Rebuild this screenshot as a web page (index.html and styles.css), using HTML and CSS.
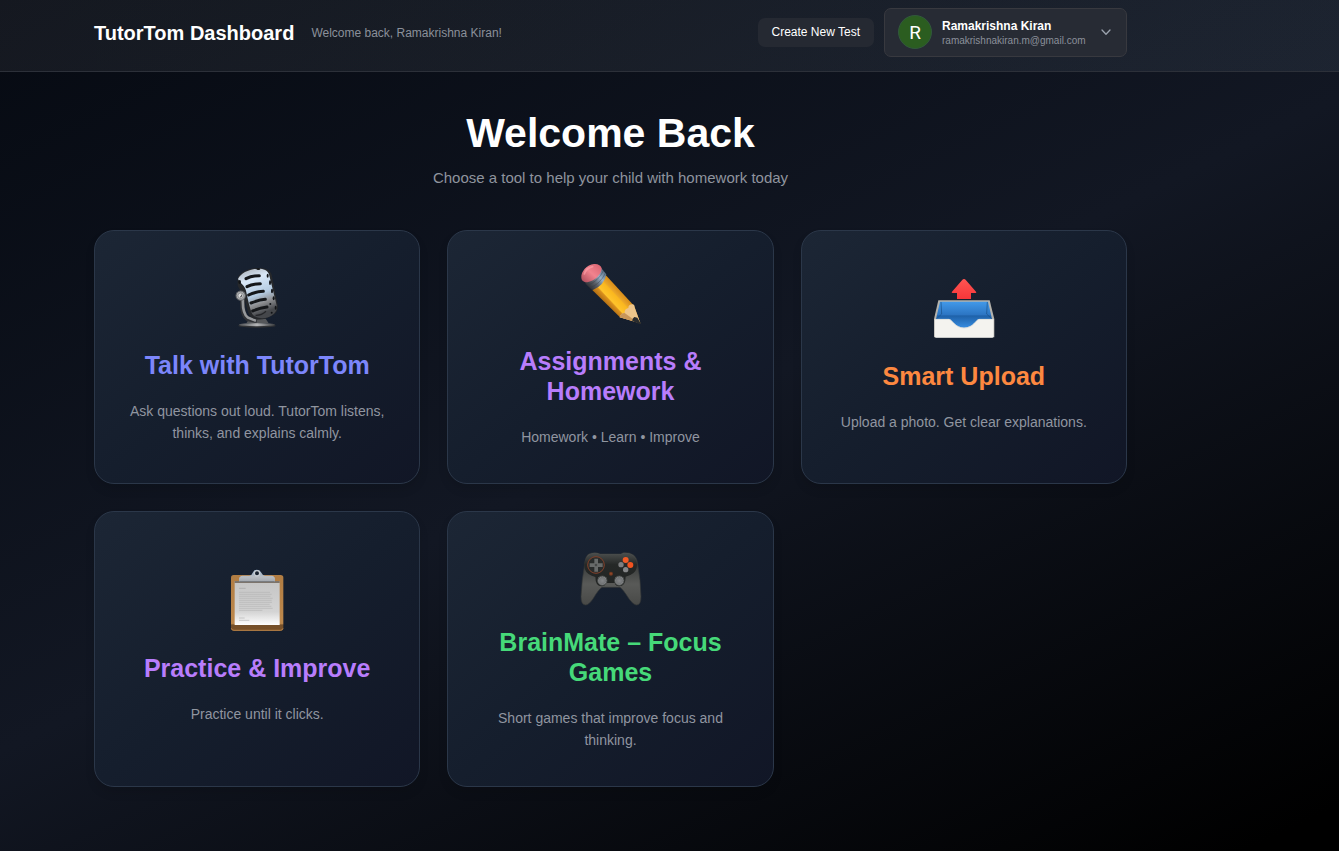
FILE: index.html
```html
<!DOCTYPE html>
<html lang="en">
<head>
<meta charset="utf-8">
<meta name="viewport" content="width=device-width, initial-scale=1">
<title>TutorTom Dashboard</title>
<link rel="stylesheet" href="styles.css">
</head>
<body>
<header class="topbar">
  <div class="brand">
    <h1 class="brand-name">TutorTom Dashboard</h1>
    <p class="brand-note">Welcome back, Ramakrishna Kiran!</p>
  </div>
  <div class="actions">
    <button class="new-test" type="button">Create New Test</button>
    <button class="profile" type="button" aria-haspopup="menu">
      <span class="avatar">R</span>
      <span class="identity">
        <span class="identity-name">Ramakrishna Kiran</span>
        <span class="identity-mail">ramakrishnakiran.m@gmail.com</span>
      </span>
      <svg class="chevron" viewBox="0 0 14 14" aria-hidden="true"><path d="M3 5l4 4.200 4-4.200" fill="none" stroke="currentColor" stroke-width="1.300" stroke-linecap="round" stroke-linejoin="round"/></svg>
    </button>
  </div>
</header>
<main class="content">
  <section class="hero">
    <h2 class="hero-title">Welcome Back</h2>
    <p class="hero-text">Choose a tool to help your child with homework today</p>
  </section>
  <section class="tools">
    <a class="card" href="#talk">
      <svg class="card-icon" viewBox="30 45 180 180" aria-hidden="true">
        <defs>
          <linearGradient id="mic" x1="0" y1="0" x2="0.300" y2="1"><stop offset="0" stop-color="#a4a8ad"/><stop offset=".3" stop-color="#d9e8f8"/><stop offset=".62" stop-color="#b4cbe2"/><stop offset=".8" stop-color="#8e8f92"/><stop offset="1" stop-color="#45474b"/></linearGradient>
          <linearGradient id="stand" x1="0" y1="0" x2="1" y2="0"><stop offset="0" stop-color="#4e5053"/><stop offset=".5" stop-color="#b5b6b8"/><stop offset="1" stop-color="#3c3e41"/></linearGradient>
        </defs>
        <ellipse cx="120" cy="212" rx="56" ry="6" fill="#303235"/>
        <ellipse cx="120" cy="209" rx="54" ry="5" fill="url(#stand)"/>
        <path d="M96 193l50-2 9 14H88z" fill="#55575a"/>
        <path d="M77 125c-2 30 2 58 15 66l28 6" fill="none" stroke="#303236" stroke-width="15"/>
        <path d="M78 125c-2 30 2 54 15 63l24 9" fill="none" stroke="#96989b" stroke-width="8"/>
        <path d="M62 71c3-17 30-32 62-32 24 0 36 8 40 20l18 91c2 18-7 30-22 34-12 11-47 15-60 0-8-10-12-31-17-53L62 92z" fill="#26282b"/>
        <path d="M63 72c8-18 36-30 61-31 16 0 28 5 32 17l24 97c1 12-10 25-27 32-18 6-40 2-47-10-8-17-14-47-19-70-4-16-19-24-24-35z" fill="url(#mic)"/>
        <g fill="none" stroke="#15171a" stroke-width="9" stroke-linecap="round"><path d="M87 71c14-8 27-9 40-9M90 95c14-8 27-9 40-9M95 120c13-7 28-10 44-11M102 144c13-5 28-10 43-11M107 168c12-5 29-10 43-12"/></g>
        <path d="M116 181q17 1 31-12" fill="none" stroke="#252629" stroke-width="4"/>
        <g fill="#111316"><ellipse cx="68" cy="81" rx="4" ry="6"/><ellipse cx="124" cy="42" rx="6" ry="3"/><ellipse cx="152" cy="62" rx="3" ry="6"/><ellipse cx="159" cy="83" rx="3" ry="7"/><ellipse cx="165" cy="108" rx="3" ry="7"/><ellipse cx="170" cy="130" rx="3" ry="6"/><circle cx="160" cy="147" r="3"/><ellipse cx="176" cy="158" rx="3" ry="6"/><circle cx="164" cy="173" r="3"/></g>
        <circle cx="71" cy="122" r="14" fill="#a9abad" stroke="#5d5f62" stroke-width="3"/>
        <circle cx="71" cy="122" r="8" fill="#dcdcdc" stroke="#707275" stroke-width="2"/><path d="M69 126q7 0 5-7" fill="none" stroke="#484a4e" stroke-width="3"/>
      </svg>
      <h3 class="card-title indigo">Talk with TutorTom</h3>
      <p class="card-text">Ask questions out loud. TutorTom listens, thinks, and explains calmly.</p>
    </a>
    <a class="card" href="#assignments">
      <svg class="card-icon" viewBox="30 33 180 180" aria-hidden="true">
        <defs>
          <linearGradient id="lead" gradientUnits="userSpaceOnUse" x1="104" y1="149" x2="150" y2="106"><stop offset="0" stop-color="#a96712"/><stop offset=".3" stop-color="#d98f1c"/><stop offset=".36" stop-color="#ffc42c"/><stop offset=".68" stop-color="#fab71e"/><stop offset=".74" stop-color="#eba729"/><stop offset="1" stop-color="#d78b18"/></linearGradient>
          <linearGradient id="rubber" x1="0" y1="1" x2="1" y2="0"><stop offset="0" stop-color="#a84856"/><stop offset=".5" stop-color="#f2838e"/><stop offset="1" stop-color="#d6616e"/></linearGradient>
          <linearGradient id="ferrule" gradientUnits="userSpaceOnUse" x1="52" y1="96" x2="104" y2="46"><stop offset="0" stop-color="#292b30"/><stop offset=".35" stop-color="#5b6068"/><stop offset=".65" stop-color="#96b0c8"/><stop offset="1" stop-color="#50657b"/></linearGradient>
        </defs>
        <path d="M66 104L107 60l85 92 19 53-61-18z" fill="url(#lead)"/>
        <path d="M149 187q3-13 15-13-2-12 11-15 0-11 12-11 7 0 7 9l17 48z" fill="#edc58b"/>
        <path d="M149 187q3-13 15-13l40 29z" fill="#c8965a"/>
        <path d="M193 186l9 2 9 15q0 4-5 3l-19-8q-1-8 6-12z" fill="#292b2d"/>
        <path d="M46 82q30-4 47-44l16 20q-5 33-42 48L47 87z" fill="url(#ferrule)"/>
        <path d="M54 90q30-10 47-44M61 98q29-11 45-43" fill="none" stroke="#343a42" stroke-width="2" stroke-opacity=".6"/>
        <path d="M34 68c-2-18 17-39 38-41 12-1 21 4 23 13 0 19-22 38-43 42-9 0-17-4-18-14z" fill="url(#rubber)"/>
        <path d="M43 57q5-17 25-22" fill="none" stroke="#ffa3aa" stroke-width="5" stroke-linecap="round" stroke-opacity=".6"/>
      </svg>
      <h3 class="card-title purple">Assignments &amp; Homework</h3>
      <p class="card-text">Homework • Learn • Improve</p>
    </a>
    <a class="card" href="#upload">
      <svg class="card-icon" viewBox="30 33 180 180" aria-hidden="true">
        <defs>
          <linearGradient id="tray" x1="0" y1="0" x2="0" y2="1"><stop offset="0" stop-color="#4299e9"/><stop offset=".48" stop-color="#2c75c3"/><stop offset=".52" stop-color="#1e61a9"/><stop offset="1" stop-color="#3a91e6"/></linearGradient>
          <linearGradient id="arrow" x1="0" y1="0" x2="0" y2="1"><stop offset="0" stop-color="#ff5552"/><stop offset="1" stop-color="#f63639"/></linearGradient>
        </defs>
        <path d="M43 91h154l14 56v55H30v-55z" fill="#b4b2ac"/>
        <path d="M48 95h144l12 52v30H36v-30z" fill="url(#tray)"/>
        <path d="M51 96l2 36-16 15M190 96l-2 36 16 15" fill="none" stroke="#194e85" stroke-width="2"/>
        <path d="M32 147h42c11 0 17 25 46 26 29 0 36-26 46-26h43v52q0 4-4 4H36q-4 0-4-4z" fill="#f4f3ef"/>
        <path d="M32 148h42c11 0 17 25 46 26 29 0 36-26 46-26h43" fill="none" stroke="#d2d4d3" stroke-width="2"/>
        <path d="M120 27q3 0 6 4l30 34q3 4-2 4h-13v18H99V69H86q-5 0-2-4l30-34q3-4 6-4z" fill="url(#arrow)"/>
      </svg>
      <h3 class="card-title orange">Smart Upload</h3>
      <p class="card-text">Upload a photo. Get clear explanations.</p>
    </a>
    <a class="card" href="#practice">
      <svg class="card-icon" viewBox="30 39 180 180" aria-hidden="true">
        <defs>
          <linearGradient id="board" x1="0" y1="0" x2="0" y2="1"><stop offset="0" stop-color="#b17d43"/><stop offset=".87" stop-color="#bd884c"/><stop offset=".9" stop-color="#75502a"/><stop offset="1" stop-color="#795027"/></linearGradient>
          <linearGradient id="paper" x1="0" y1="0" x2="0" y2="1"><stop offset="0" stop-color="#c5c5c5"/><stop offset=".7" stop-color="#d4d4d4"/><stop offset="1" stop-color="#fff"/></linearGradient>
          <linearGradient id="clip" x1="0" y1="0" x2="0" y2="1"><stop offset="0" stop-color="#8eacca"/><stop offset=".6" stop-color="#b8bdc3"/><stop offset="1" stop-color="#a2a7ae"/></linearGradient>
        </defs>
        <rect x="42" y="45" width="157" height="167" rx="8" fill="url(#board)"/>
        <path d="M43 205q1 6 8 6h139q7 0 8-6" fill="none" stroke="#b68147" stroke-width="3"/>
        <path d="M53 63h135v132H53z" fill="url(#paper)"/>
        <path d="M53 66h135" stroke="#66594b" stroke-width="5"/>
        <g fill="none" stroke="#b4b4b4" stroke-width="2"><path d="M66 85h20" stroke="#a5a5a5"/><path d="M66 97h93M66 103h98M66 109h94M66 115h101M66 121h98M66 127h99M66 133h92M66 139h97M66 145h101M66 151h70M66 174h17M66 181h31"/></g>
        <path d="M66 65v-9q1-8 11-9h20q8-1 11-10 3-8 12-8t12 8q4 9 12 10h20q9 1 10 9v9z" fill="url(#clip)"/>
        <circle cx="120" cy="40" r="8" fill="#192330" stroke="#c7ccd1" stroke-width="4"/>
        <path d="M67 65h106" stroke="#74777b" stroke-width="3"/>
      </svg>
      <h3 class="card-title purple">Practice &amp; Improve</h3>
      <p class="card-text">Practice until it clicks.</p>
    </a>
    <a class="card" href="#games">
      <svg class="card-icon" viewBox="30 21 180 180" aria-hidden="true">
        <defs>
          <linearGradient id="pad" x1="0" y1="0" x2="0" y2="1"><stop offset="0" stop-color="#5c5e5c"/><stop offset=".2" stop-color="#363938"/><stop offset=".6" stop-color="#595a58"/><stop offset="1" stop-color="#484947"/></linearGradient>
          <linearGradient id="face" x1="0" y1="0" x2="0" y2="1"><stop offset="0" stop-color="#4c4f4e"/><stop offset=".35" stop-color="#252827"/><stop offset="1" stop-color="#222423"/></linearGradient>
          <radialGradient id="stick"><stop offset="0" stop-color="#858789"/><stop offset=".7" stop-color="#727476"/><stop offset="1" stop-color="#a0a2a3"/></radialGradient>
        </defs>
        <path d="M55 43q10-6 27-4l8 3h62l9-4q18-1 28 6 12 8 14 29 9 48 10 97 0 25-13 25-10 0-24-20-17-27-26-33H96q-10 6-26 33-13 20-23 20-14 0-14-25 2-50 11-97 2-23 11-30z" fill="url(#pad)" stroke="#343737" stroke-width="2"/>
        <path d="M61 42q10-4 22-2l8 3h62l9-4q17-1 24 5 15 10 15 32 0 21-20 29l-14 5q0 29-20 29-10 0-13-10h-26q-3 10-13 10-19 0-19-28l-11-4q-22-8-22-31 0-23 18-34z" fill="url(#face)"/>
        <circle cx="78" cy="75" r="25" fill="#292c2b" stroke="#82412a" stroke-width="3"/>
        <path d="M73 56h11v14h14v11H84v14H73V81H59V70h14z" fill="#686b6a"/>
        <circle cx="78" cy="75" r="4" fill="#454847"/>
        <circle cx="167" cy="60" r="9" fill="#f25a26"/><circle cx="181" cy="75" r="9" fill="#f25320"/><circle cx="153" cy="74" r="8" fill="#7d7e80"/><circle cx="167" cy="89" r="8" fill="#858688"/>
        <circle cx="123" cy="101" r="6" fill="#713820"/><circle cx="123" cy="101" r="3" fill="#91492a"/>
        <g fill="url(#stick)" stroke="#434645" stroke-width="3"><circle cx="97" cy="122" r="14"/><circle cx="148" cy="122" r="14"/></g>
      </svg>
      <h3 class="card-title green">BrainMate – Focus Games</h3>
      <p class="card-text">Short games that improve focus and thinking.</p>
    </a>
  </section>
</main>
</body>
</html>
```

FILE: styles.css
```css
* {
  box-sizing: border-box;
}

body {
  margin: 0;
  min-height: 100vh;
  background: linear-gradient(154deg, #060a12 0%, #121723 50%, #000 97%);
  color: #fff;
  font-family: "Liberation Sans", Arial, sans-serif;
}

h1, h2, h3, p {
  margin: 0;
}

button {
  font: inherit;
  color: inherit;
  cursor: pointer;
}

.topbar {
  display: flex;
  justify-content: space-between;
  align-items: center;
  gap: 16px;
  padding: 8px 212px 14px 94px;
  background: linear-gradient(to right, rgba(255, 255, 255, 0.06), rgba(180, 215, 240, 0.07));
  border-bottom: 1px solid #2c3039;
}

.brand {
  display: flex;
  align-items: center;
  gap: 17px;
}

.brand-name {
  font-size: 20px;
  line-height: 28px;
}

.brand-note {
  font-size: 12px;
  line-height: 16px;
  color: #8b909a;
}

.actions {
  display: flex;
  align-items: center;
  gap: 10px;
}

.new-test {
  padding: 6px 14px;
  border: 0;
  border-radius: 7px;
  background: #252932;
  font-size: 12px;
  line-height: 17px;
}

.profile {
  display: flex;
  align-items: center;
  gap: 10px;
  padding: 6px 13px 7px;
  border: 1px solid #38393f;
  border-radius: 7px;
  background: #272b34;
  text-align: left;
}

.avatar {
  display: grid;
  place-items: center;
  width: 34px;
  height: 34px;
  border: 1px solid #31583c;
  border-radius: 50%;
  background: #2b5d20;
  font-family: Roboto, sans-serif;
  font-size: 19px;
}

.identity {
  display: flex;
  flex-direction: column;
  min-width: 147px;
}

.identity-name {
  font-size: 12px;
  font-weight: 700;
  line-height: 18px;
}

.identity-mail {
  font-size: 10px;
  line-height: 12px;
  color: #8b909a;
}

.chevron {
  width: 14px;
  height: 14px;
  color: #9ca3af;
}

.content {
  padding: 37px 212px 64px 94px;
}

.hero {
  margin-bottom: 40px;
  text-align: center;
}

.hero-title {
  margin-bottom: 9px;
  font-size: 41px;
  line-height: 48px;
}

.hero-text {
  font-size: 15px;
  line-height: 24px;
  color: #8f949e;
}

.tools {
  display: grid;
  grid-template-columns: repeat(3, 1fr);
  gap: 27px;
}

.card {
  display: flex;
  flex-direction: column;
  align-items: center;
  justify-content: center;
  gap: 20px;
  padding: 35px 33px;
  border: 1px solid #2b3749;
  border-radius: 20px;
  background: linear-gradient(to bottom right, #1c2635, #151e2d 50%, #111626);
  box-shadow: 0 6px 10px rgba(0, 0, 0, 0.1);
  color: inherit;
  text-align: center;
  text-decoration: none;
}

.card-icon {
  width: 60px;
  height: 60px;
  overflow: visible;
}

.card-title {
  font-size: 25px;
  line-height: 30px;
}

.card-text {
  font-size: 14px;
  line-height: 22px;
  color: #9095a0;
}

.indigo { color: #7c86fb; }
.purple { color: #b87dfc; }
.orange { color: #fd8840; }
.green { color: #46d979; }
```
